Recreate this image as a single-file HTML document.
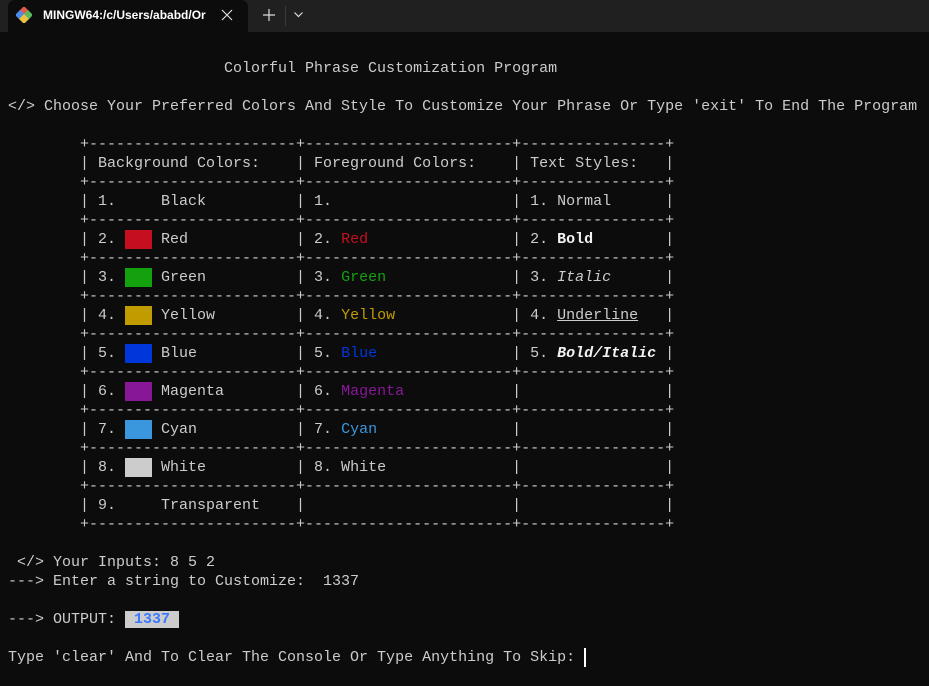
<!DOCTYPE html>
<html><head><meta charset="utf-8">
<style>
html,body{margin:0;padding:0;width:929px;height:686px;overflow:hidden;background:#0c0c0c;}
.bar{position:absolute;left:0;top:0;width:929px;height:32px;background:#202020;}
.tab{position:absolute;left:8px;top:0;width:240px;height:32px;background:#0c0c0c;border-radius:7px 7px 0 0;}
.title{position:absolute;left:43px;top:8px;font:bold 12px "Liberation Sans",sans-serif;color:#fff;white-space:nowrap;width:164px;overflow:hidden;}
pre{position:absolute;left:8px;top:40px;margin:0;font-family:"Liberation Mono",monospace;font-size:15px;line-height:19px;color:#cccccc;}
.sw{display:inline-block;width:27px;height:19px;vertical-align:top;}
b{color:#f2f2f2;}
.cur{display:inline-block;width:2px;height:19px;background:#fff;vertical-align:top;}
</style></head><body>
<div class="bar"></div>
<div class="tab"></div>
<svg style="position:absolute;left:16px;top:7px" width="16" height="16" viewBox="0 0 16 16">
<rect x="4.5" y="0.5" width="7" height="7" transform="rotate(45 8 4)" fill="#e05a4f"/>
<rect x="0.5" y="4.5" width="7" height="7" transform="rotate(45 4 8)" fill="#4a8ce8"/>
<rect x="8.5" y="4.5" width="7" height="7" transform="rotate(45 12 8)" fill="#5cb85c"/>
<rect x="4.5" y="8.5" width="7" height="7" transform="rotate(45 8 12)" fill="#f0c040"/>
</svg>
<div class="title">MINGW64:/c/Users/ababd/Or</div>
<svg style="position:absolute;left:221px;top:9px" width="12" height="12" viewBox="0 0 12 12"><path d="M1 1L11 11M11 1L1 11" stroke="#ddd" stroke-width="1.2"/></svg>
<svg style="position:absolute;left:263px;top:9px" width="12" height="12" viewBox="0 0 12 12"><path d="M6 0V12M0 6H12" stroke="#ddd" stroke-width="1.2"/></svg>
<div style="position:absolute;left:285px;top:6px;width:1px;height:20px;background:#3a3a3a"></div>
<svg style="position:absolute;left:294px;top:12px" width="9" height="6" viewBox="0 0 9 6"><path d="M0.5 0.5L4.5 4.5L8.5 0.5" stroke="#ddd" fill="none" stroke-width="1.2"/></svg>
<pre>

                        Colorful Phrase Customization Program

&lt;/&gt; Choose Your Preferred Colors And Style To Customize Your Phrase Or Type 'exit' To End The Program

        +-----------------------+-----------------------+----------------+
        | Background Colors:    | Foreground Colors:    | Text Styles:   |
        +-----------------------+-----------------------+----------------+
        | 1.     Black          | 1.                    | 1. Normal      |
        +-----------------------+-----------------------+----------------+
        | 2. <span class="sw" style="background:#c50f1f"></span> Red            | 2. <span style="color:#c50f1f">Red</span>                | 2. <b>Bold</b>        |
        +-----------------------+-----------------------+----------------+
        | 3. <span class="sw" style="background:#13a10e"></span> Green          | 3. <span style="color:#13a10e">Green</span>              | 3. <i>Italic</i>      |
        +-----------------------+-----------------------+----------------+
        | 4. <span class="sw" style="background:#c19c00"></span> Yellow         | 4. <span style="color:#c19c00">Yellow</span>             | 4. <u>Underline</u>   |
        +-----------------------+-----------------------+----------------+
        | 5. <span class="sw" style="background:#0037da"></span> Blue           | 5. <span style="color:#0037da">Blue</span>               | 5. <b><i>Bold/Italic</i></b> |
        +-----------------------+-----------------------+----------------+
        | 6. <span class="sw" style="background:#881798"></span> Magenta        | 6. <span style="color:#881798">Magenta</span>            |                |
        +-----------------------+-----------------------+----------------+
        | 7. <span class="sw" style="background:#3a96dd"></span> Cyan           | 7. <span style="color:#3a96dd">Cyan</span>               |                |
        +-----------------------+-----------------------+----------------+
        | 8. <span class="sw" style="background:#cccccc"></span> White          | 8. White              |                |
        +-----------------------+-----------------------+----------------+
        | 9.     Transparent    |                       |                |
        +-----------------------+-----------------------+----------------+

 &lt;/&gt; Your Inputs: 8 5 2
---&gt; Enter a string to Customize:  1337

---&gt; OUTPUT: <span style="background:#cccccc;color:#3b78ff;font-weight:bold"> 1337 </span>

Type 'clear' And To Clear The Console Or Type Anything To Skip: <span class="cur"></span>
</pre>
</body></html>
